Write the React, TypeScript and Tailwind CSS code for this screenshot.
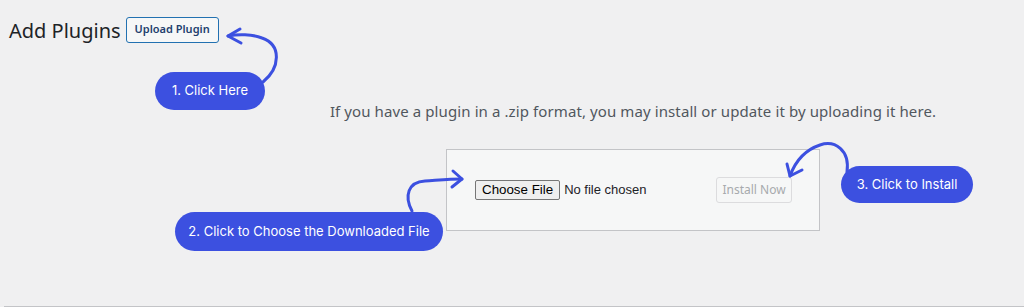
import React from "react";

const PILL =
  "absolute flex items-center justify-center rounded-full bg-[#3c50e0] text-white text-[13px] font-['Inter',sans-serif]";

export default function App() {
  return (
    <div className="relative w-[1024px] h-[307px] overflow-hidden bg-[#f0f0f1] font-['Noto_Sans',sans-serif]">
      <div className="flex h-full flex-col">
        {/* header */}
        <div className="flex items-center gap-[5px] pl-[9px] pt-[15px]">
          <h1 className="mt-[3px] text-[20px] leading-[26px] font-normal text-[#1d2327]">
            Add Plugins
          </h1>
          <button className="h-[26px] w-[93px] rounded-[3px] border border-[#2271b1] bg-[#f6f7f7] text-[11px] font-semibold text-[#1f3f6e]">
            Upload Plugin
          </button>
        </div>

        {/* upload area */}
        <div className="ml-[242px] mt-[57px] flex flex-col items-center">
          <p className="text-[15px] leading-[20px] tracking-[0.1px] text-[#50575e]">
            If you have a plugin in a .zip format, you may install or update it
            by uploading it here.
          </p>
          <div className="mt-[28px] flex h-[82px] w-[374px] items-center justify-between border border-[#c3c4c7] bg-[#f6f7f7] pl-[28px] pr-[27px]">
            <div className="flex items-center gap-[4px] font-['Liberation_Sans',sans-serif] text-[13px]">
              <button className="h-[20px] rounded-[2px] border border-[#767676] bg-[#efefef] px-[6px] text-[13.33px] leading-[16px] text-black">
                Choose File
              </button>
              <span className="text-[#1d2327]">No file chosen</span>
            </div>
            <button className="h-[26px] w-[76px] rounded-[3px] border border-[#dcdcde] bg-[#f6f7f7] text-[12px] text-[#a7aaad]">
              Install Now
            </button>
          </div>
        </div>

        <div className="mt-auto mb-0 ml-[4px] border-t border-[#c3c4c7]" />
      </div>

      {/* annotations */}
      <div className={`${PILL} left-[155px] top-[72px] h-[38px] w-[110px]`}>
        1. Click Here
      </div>
      <div className={`${PILL} left-[175px] top-[212px] h-[39px] w-[268px]`}>
        2. Click to Choose the Downloaded File
      </div>
      <div className={`${PILL} left-[841px] top-[166px] h-[37px] w-[132px]`}>
        3. Click to Install
      </div>

      <svg
        className="pointer-events-none absolute inset-0"
        width="1024"
        height="307"
        fill="none"
        stroke="#3c50e0"
        strokeWidth="3"
        strokeLinecap="round"
        strokeLinejoin="round"
      >
        <path d="M263 82 C280 68 282 45 262 38 C252 34 238 34 228 36" />
        <path d="M240 29 L228 36 L241 43" />
        <path d="M412 211 C404 196 408 182 425 181 C440 180 450 179 462 179" />
        <path d="M453 171 L462 179 L452 187" />
        <path d="M847 172 C850 150 835 140 820 145 C805 150 795 162 790 176" />
        <path d="M787 164 L790 176 L802 170" />
      </svg>
    </div>
  );
}
